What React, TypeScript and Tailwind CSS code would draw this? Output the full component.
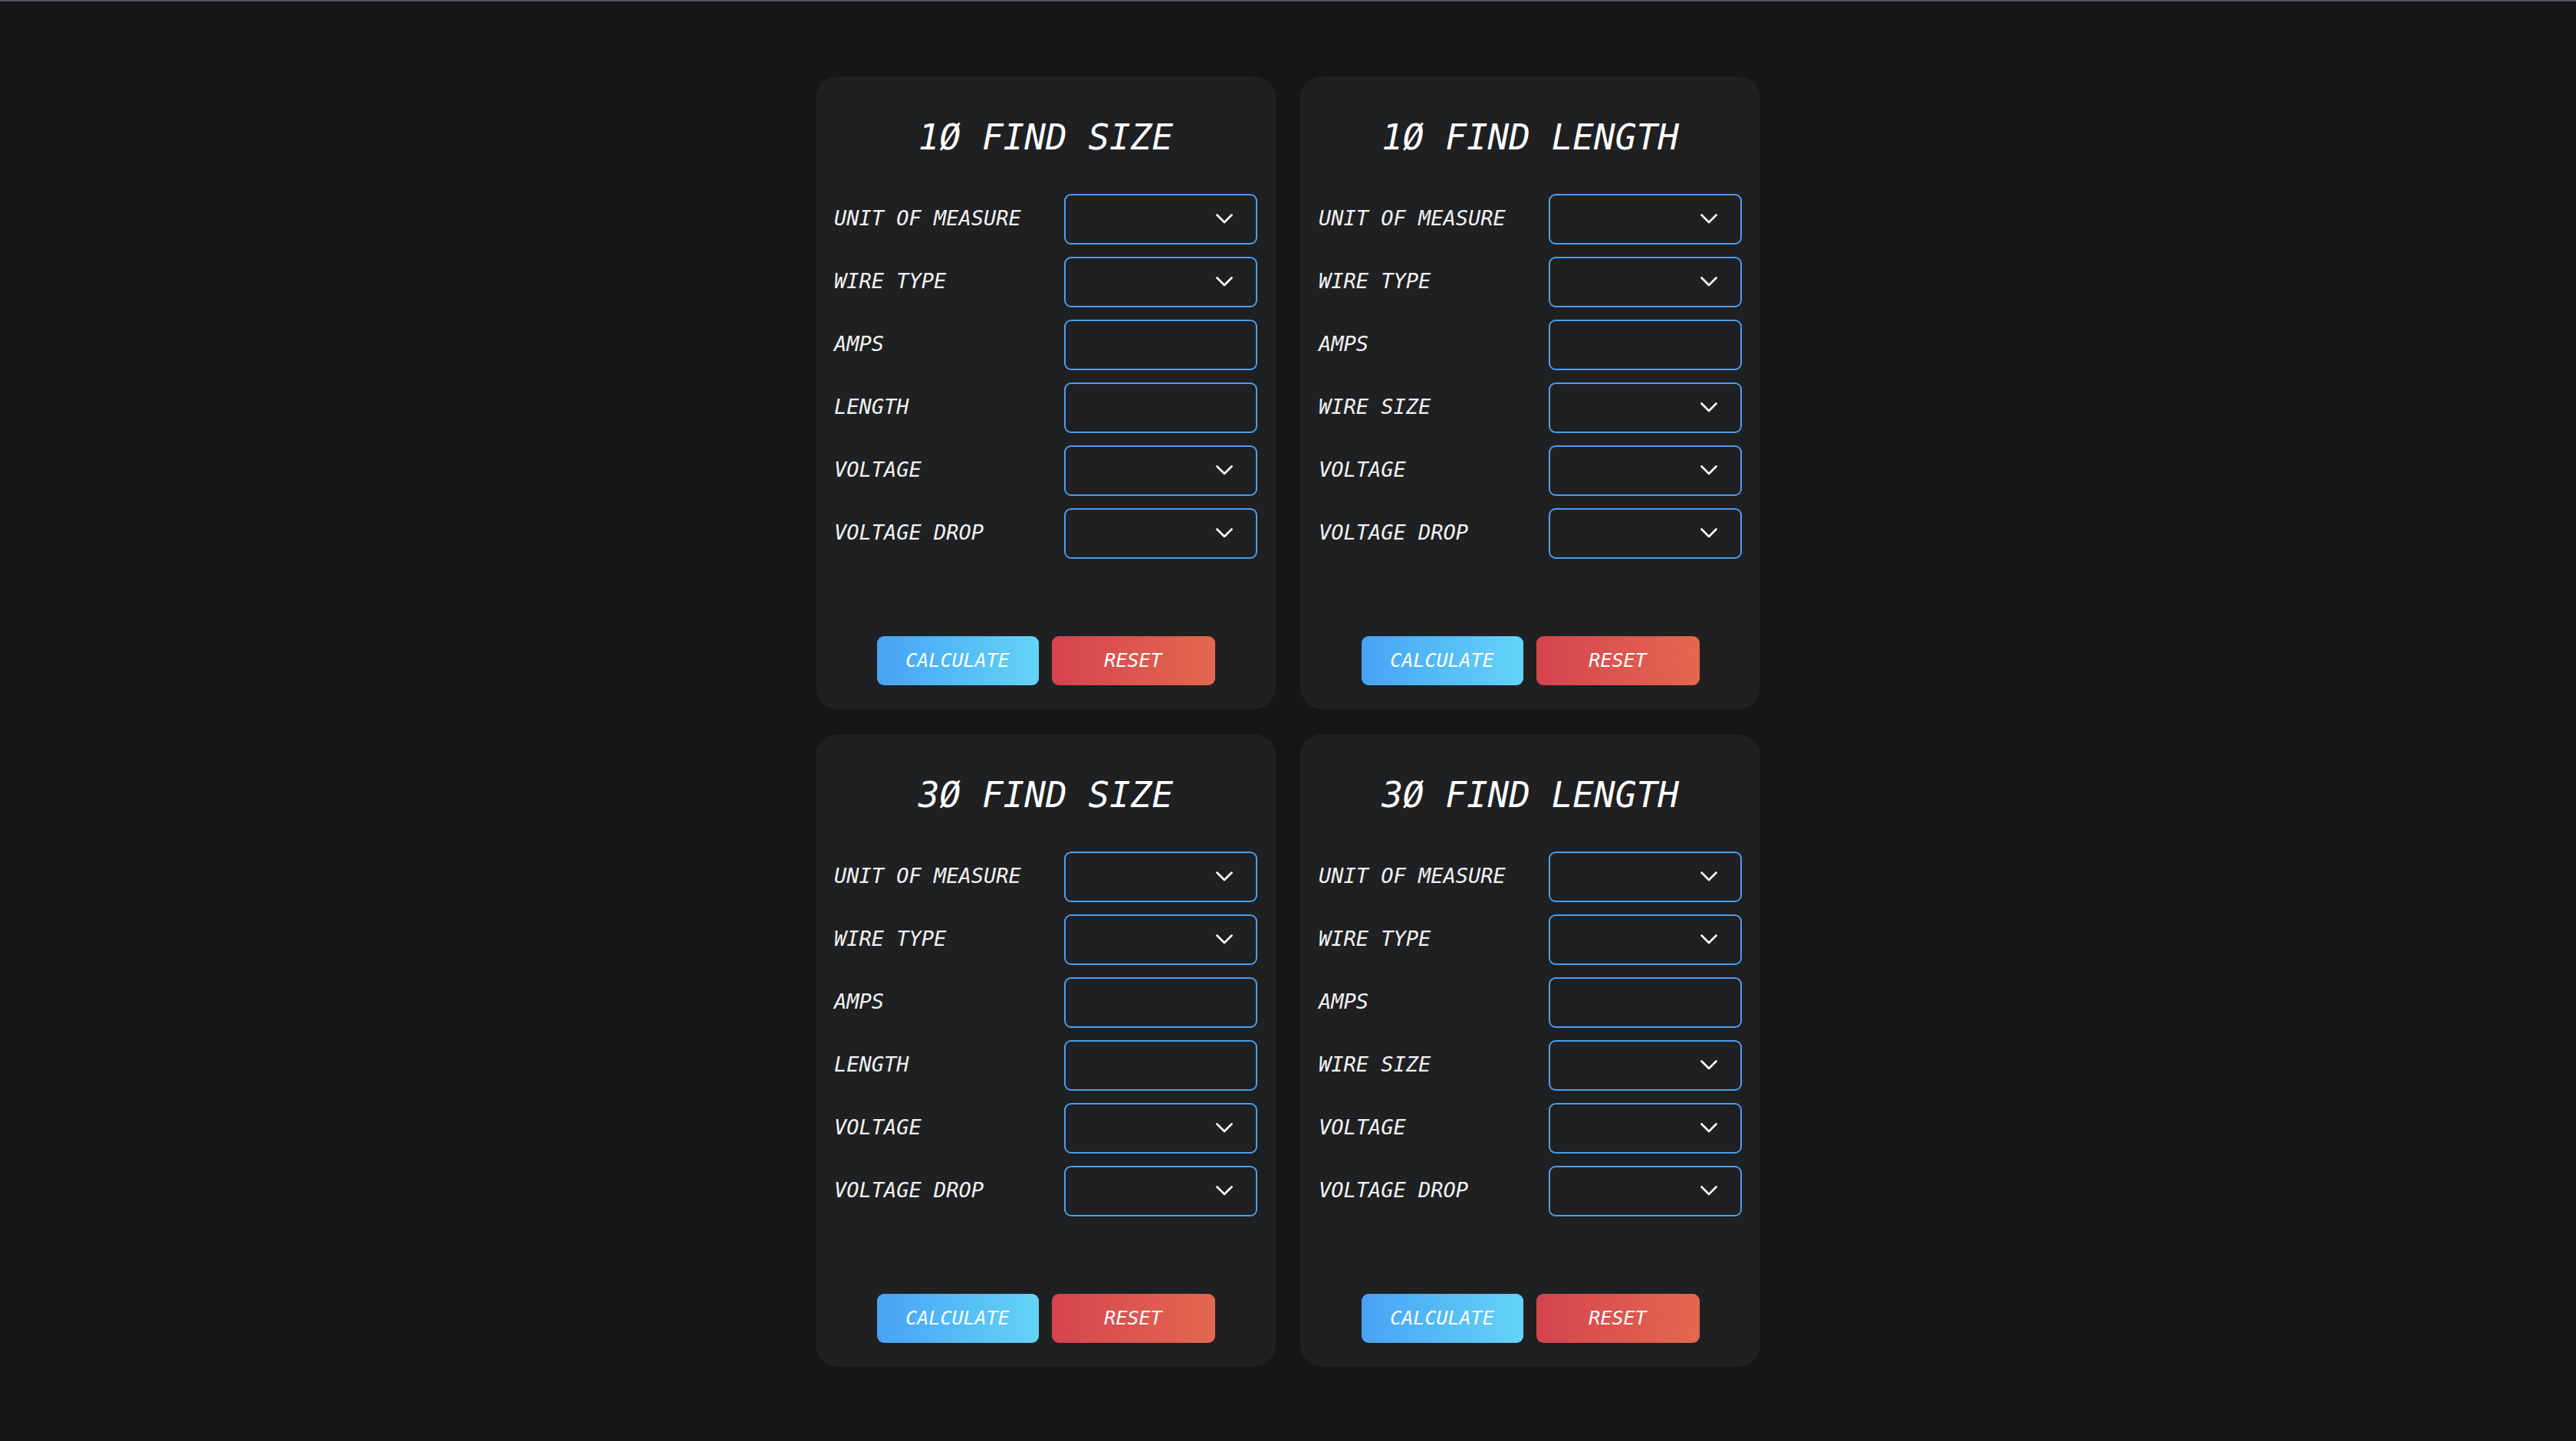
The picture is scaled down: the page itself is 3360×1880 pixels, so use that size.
import { ReactNode } from "react";

type Field = { label: string; kind: "select" | "input" };

const sizeFields: Field[] = [
  { label: "UNIT OF MEASURE", kind: "select" },
  { label: "WIRE TYPE", kind: "select" },
  { label: "AMPS", kind: "input" },
  { label: "LENGTH", kind: "input" },
  { label: "VOLTAGE", kind: "select" },
  { label: "VOLTAGE DROP", kind: "select" },
];

const lengthFields: Field[] = [
  { label: "UNIT OF MEASURE", kind: "select" },
  { label: "WIRE TYPE", kind: "select" },
  { label: "AMPS", kind: "input" },
  { label: "WIRE SIZE", kind: "select" },
  { label: "VOLTAGE", kind: "select" },
  { label: "VOLTAGE DROP", kind: "select" },
];

const Chevron = () => (
  <svg width="22" height="13" viewBox="0 0 22 13" fill="none">
    <polyline
      points="1.5,1.5 11,11 20.5,1.5"
      stroke="#ffffff"
      strokeWidth="2.6"
      strokeLinecap="round"
      strokeLinejoin="round"
    />
  </svg>
);

const Box = ({ children }: { children?: ReactNode }) => (
  <div className="w-[252px] h-[66px] rounded-[9px] border-2 border-[#4a9ef0] flex items-center justify-end pr-[30px]">
    {children}
  </div>
);

const Card = ({ title, fields }: { title: string; fields: Field[] }) => {
  return (
    <section className="w-[600px] h-[825px] bg-[#1f2022] rounded-[28px] px-6 pt-[56px] pb-[31px] flex flex-col">
      <h2 className="text-center text-[46px] leading-[46px] italic text-white">
        {title}
      </h2>
      <div className="mt-[51px] flex flex-col gap-4">
        {fields.map((f) => (
          <div key={f.label} className="flex items-center justify-between">
            <span className="text-[27px] italic text-[#f2f2f2]">
              {f.label}
            </span>
            <Box>{f.kind === "select" && <Chevron />}</Box>
          </div>
        ))}
      </div>
      <div className="mt-auto flex justify-center gap-[17px]">
        <button className="w-[211px] h-[64px] rounded-[9px] bg-linear-to-r from-[#48a2f5] to-[#63d4f6] text-white italic text-[25px]">
          CALCULATE
        </button>
        <button className="w-[213px] h-[64px] rounded-[9px] bg-linear-to-r from-[#d5434f] to-[#e3674e] text-white italic text-[25px]">
          RESET
        </button>
      </div>
    </section>
  );
};

export default function App() {
  return (
    <div
      className="min-h-screen bg-[#151618] border-t-2 border-[#55565a] flex items-center justify-center"
      style={{ fontFamily: '"DejaVu Sans Mono", "Liberation Mono", monospace' }}
    >
      <div className="grid grid-cols-[600px_600px] gap-x-8 gap-y-[33px]">
        <Card title="1Ø FIND SIZE" fields={sizeFields} />
        <Card title="1Ø FIND LENGTH" fields={lengthFields} />
        <Card title="3Ø FIND SIZE" fields={sizeFields} />
        <Card title="3Ø FIND LENGTH" fields={lengthFields} />
      </div>
    </div>
  );
}
